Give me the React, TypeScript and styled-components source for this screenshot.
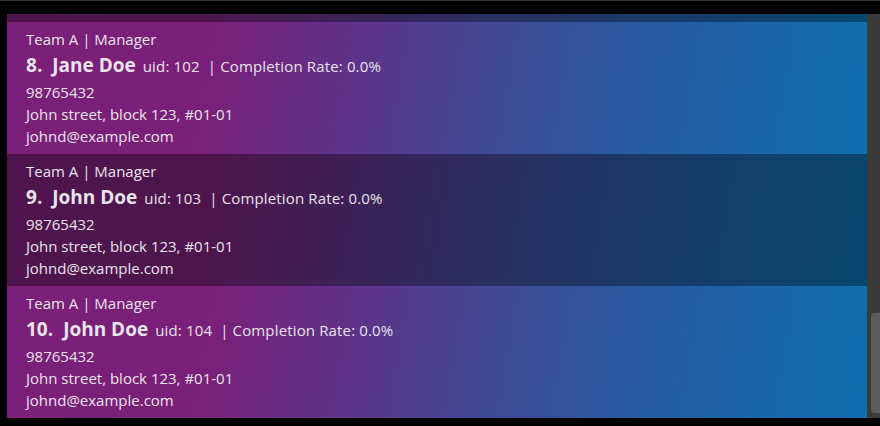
import { useLayoutEffect, useRef } from "react";
import styled, { createGlobalStyle } from "styled-components";

const GlobalStyle = createGlobalStyle`
  html, body {
    margin: 0;
    padding: 0;
    background: #000;
  }
`;

interface Person {
  index: number;
  name: string;
  uid: number;
}

const people: Person[] = Array.from({ length: 10 }, (_, i) => ({
  index: i + 1,
  name: i === 7 ? "Jane Doe" : "John Doe",
  uid: 95 + i,
}));

const PersonCard = ({ person, dim }: { person: Person; dim: boolean }) => (
  <Card dim={dim}>
    <Line>Team A | Manager</Line>
    <NameRow>
      <Index>{person.index}.</Index>
      <Name>{person.name}</Name>
      <Meta>uid: {person.uid}</Meta>
      <Meta>| Completion Rate: 0.0%</Meta>
    </NameRow>
    <Line>98765432</Line>
    <Line>John street, block 123, #01-01</Line>
    <Line>johnd@example.com</Line>
  </Card>
);

const App = () => {
  const listRef = useRef<HTMLDivElement>(null);

  // the list is scrolled all the way down
  useLayoutEffect(() => {
    const el = listRef.current;
    if (el) el.scrollTop = el.scrollHeight;
  }, []);

  return (
    <>
      <GlobalStyle />
      <Window>
        <TopEdge />
        <Body>
          <List ref={listRef}>
            {people.map((p) => (
              <PersonCard key={p.index} person={p} dim={p.index % 2 === 1} />
            ))}
          </List>
          <ScrollTrack>
            <Thumb />
          </ScrollTrack>
        </Body>
      </Window>
    </>
  );
};

const Window = styled.div`
  width: 880px;
  height: 426px;
  background: #000;
  overflow: hidden;
`;

const TopEdge = styled.div`
  height: 1px;
  background: #333;
  margin-bottom: 13px;
`;

const Body = styled.div`
  display: flex;
  height: 404px;
  padding-left: 7px;
`;

const List = styled.div`
  flex: 1;
  height: 404px;
  overflow: hidden;
`;

const gradient =
  "linear-gradient(100deg, #7b1f78 0%, #7a2079 24%, #5a358a 42%, #3d4a97 58%, #2a5aa2 72%, #0d6fae 100%)";

const Card = styled.div<{ dim: boolean }>`
  height: 132px;
  box-sizing: border-box;
  padding: 6px 0 0 19px;
  display: flex;
  flex-direction: column;
  color: #e8e4ea;
  font-family: "Open Sans", "Noto Sans", sans-serif;
  font-size: 15px;
  background: ${({ dim }) =>
    dim
      ? `linear-gradient(rgba(0,0,0,0.36), rgba(0,0,0,0.36)), ${gradient}`
      : gradient};
`;

const Line = styled.div`
  height: 22px;
  line-height: 22px;
  white-space: nowrap;
`;

const NameRow = styled.div`
  display: flex;
  align-items: baseline;
  height: 31px;
  line-height: 31px;
  white-space: nowrap;
`;

const Index = styled.span`
  font-size: 19px;
  font-weight: 700;
  margin-right: 10px;
`;

const Name = styled.span`
  font-size: 19px;
  font-weight: 700;
  margin-right: 7px;
`;

const Meta = styled.span`
  margin-right: 8px;
  letter-spacing: 0.15px;
`;

const ScrollTrack = styled.div`
  width: 13px;
  background: #3b3b3b;
  display: flex;
  flex-direction: column;
  justify-content: flex-end;
  align-items: flex-end;
  padding-bottom: 5px;
  box-sizing: border-box;
`;

const Thumb = styled.div`
  width: 9px;
  height: 100px;
  background: #5c5c5c;
  border-radius: 4px 0 0 4px;
`;

export default App;
